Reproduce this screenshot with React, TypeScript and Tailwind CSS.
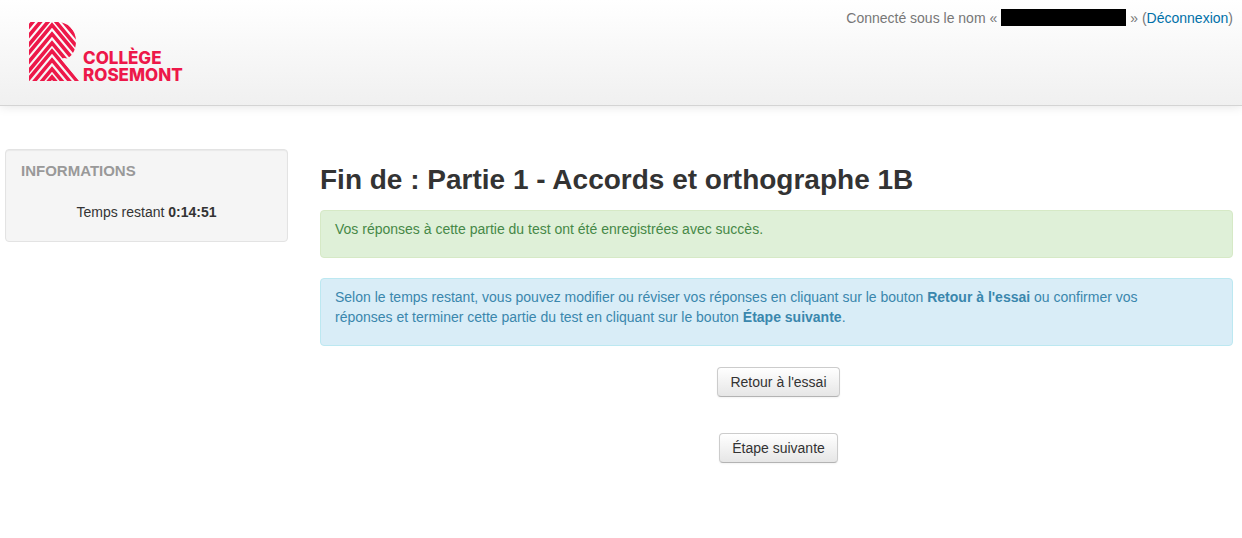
import React from "react";

const LOGO_RED = "#ed1849";

// vertical position of each chevron's tip, from top to bottom
const chevrons = [-30, -21, -12, -3, 5, 14, 23, 31, 40, 49, 57];

const Logo = () => (
  <svg
    viewBox="0 0 170 70"
    role="img"
    aria-label="Collège Rosemont"
    className="w-[170px] h-[70px]"
    fill={LOGO_RED}
  >
    <defs>
      <clipPath id="letter">
        <path d="M1 1H29C40 1 48 9 48 20C48 28 45 34 39.5 37.5L36 37L33 38L51 60H1Z" />
      </clipPath>
    </defs>
    <g clipPath="url(#letter)">
      {chevrons.map((y) => (
        <path
          key={y}
          transform={`translate(24 ${y - 21})`}
          d="M0 17.2L60 89.2V94.8L0 22.8L-60 94.8V89.2Z"
        />
      ))}
    </g>
    <g
      fontFamily="Inter, sans-serif"
      fontSize="17"
      fontWeight="800"
    >
      <text x="55" y="43">COLLÈGE</text>
      <text x="55" y="60">ROSEMONT</text>
    </g>
  </svg>
);

const Header = () => (
  <header className="flex justify-between items-start min-h-[106px] pl-7 pr-[9px] border-b border-[#d4d4d4] bg-linear-to-b from-white to-[#f0f0f0] shadow-[0_1px_10px_rgba(0,0,0,0.1)]">
    <a href="#" className="pt-[21px]">
      <Logo />
    </a>
    <p className="flex items-start pt-2 text-[#777]">
      <span>Connecté sous le nom «</span>
      <span className="w-[125px] h-[17px] mt-px mx-1 bg-black" />
      <span>
        » (
        <a href="#" className="text-[#0070a8] hover:underline">
          Déconnexion
        </a>
        )
      </span>
    </p>
  </header>
);

const Sidebar = () => (
  <aside className="w-[283px] shrink-0 px-[15px] pt-[11px] pb-[19px] rounded border border-[#e3e3e3] bg-[#f5f5f5] shadow-[inset_0_1px_1px_rgba(0,0,0,0.05)]">
    <h2 className="text-[15px] leading-5 font-bold uppercase text-[#999]">
      Informations
    </h2>
    <p className="mt-[21px] text-center">
      Temps restant <strong>0:14:51</strong>
    </p>
  </aside>
);

const buttonClass =
  "px-3 py-1 rounded border border-[#ccc] border-b-[#b3b3b3] bg-linear-to-b from-white to-[#e6e6e6] shadow-[inset_0_1px_0_rgba(255,255,255,0.2),0_1px_2px_rgba(0,0,0,0.05)] cursor-pointer";

const App = () => {
  return (
    <div className="font-['Liberation_Sans',Arial,sans-serif] text-[14px] leading-5 text-[#333]">
      <Header />

      <div className="flex items-start gap-8 pt-[43px] pl-[5px] pr-[9px] pb-10">
        <Sidebar />

        <main className="flex-1 pt-[11px]">
          <h1 className="mb-[10px] text-[28px] leading-10 font-bold">
            Fin de : Partie 1 - Accords et orthographe 1B
          </h1>

          {/* Messages */}
          <div className="mb-5 px-[14px] pt-2 pb-[18px] rounded border border-[#d6e9c6] bg-[#dff0d8] text-[#468847]">
            Vos réponses à cette partie du test ont été enregistrées avec succès.
          </div>
          <div className="px-[14px] pt-2 pb-[18px] rounded border border-[#bce8f1] bg-[#d9edf7] text-[#3a87ad]">
            <p className="max-w-[840px]">
              Selon le temps restant, vous pouvez modifier ou réviser vos
              réponses en cliquant sur le bouton{" "}
              <strong>Retour à l'essai</strong> ou confirmer vos réponses et
              terminer cette partie du test en cliquant sur le bouton{" "}
              <strong>Étape suivante</strong>.
            </p>
          </div>

          {/* Actions */}
          <div className="flex flex-col items-center gap-9 pt-[21px] pl-1">
            <button type="button" className={buttonClass}>
              Retour à l'essai
            </button>
            <button type="button" className={buttonClass}>
              Étape suivante
            </button>
          </div>
        </main>
      </div>
    </div>
  );
};

export default App;
